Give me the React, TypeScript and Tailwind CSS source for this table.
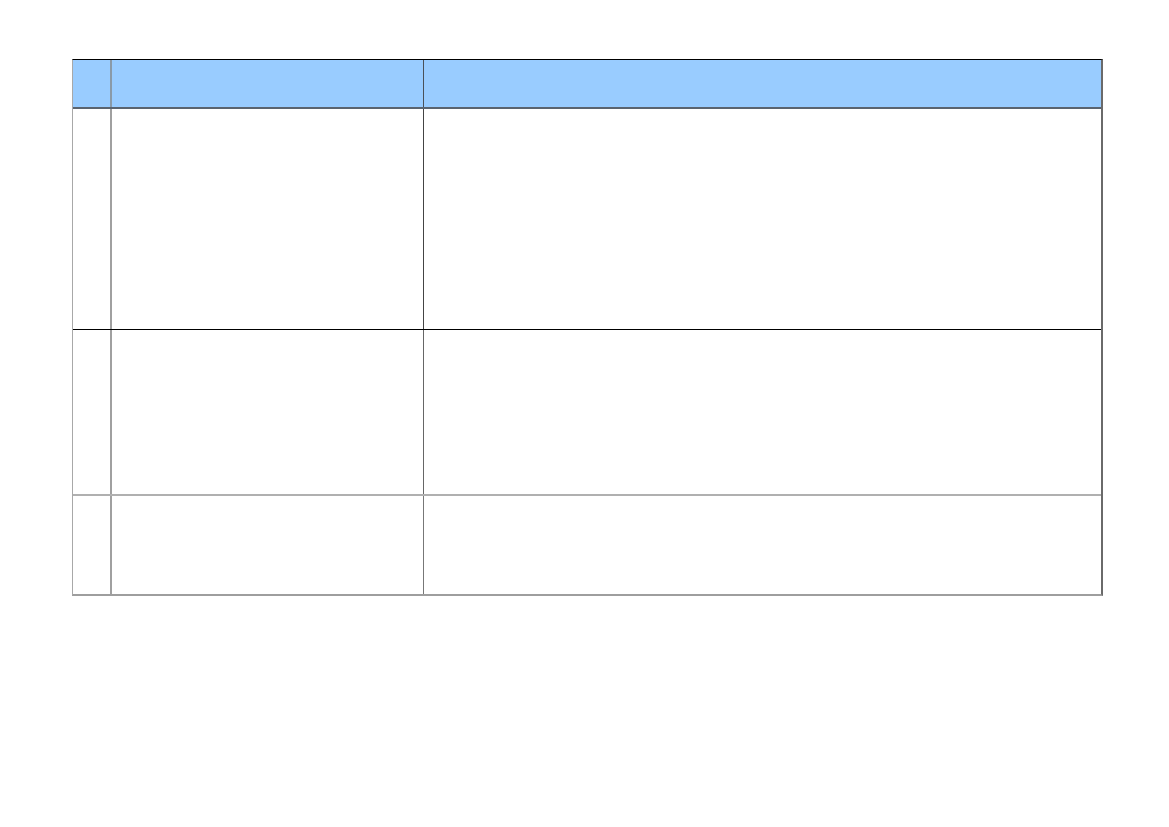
export default function App() {
  const rowCls = "grid grid-cols-[39px_312px_1fr]";
  return (
    <div className="w-[1169px] h-[827px] bg-white" style={{ fontFamily: "'Liberation Sans', sans-serif" }}>
      <div className="pl-[72px] pt-[59px]">
        <div className="w-[1031px] border-t border-t-black border-l border-l-[#a8a8a8] border-r-2 border-r-[#6a6a6a] border-b-2 border-b-[#9e9e9e]">
          <div className={`${rowCls} h-[49px] bg-[#99ccff] border-b-2 border-b-[#5a6470]`}>
            <div className="border-r-2 border-r-[#8a9aa8]" />
            <div className="border-r border-r-[#4a5058]" />
            <div />
          </div>
          <div className={`${rowCls} h-[221px] border-b border-b-black`}>
            <div className="border-r-2 border-r-[#a0a0a0]" />
            <div className="border-r border-r-[#444444]" />
            <div />
          </div>
          <div className={`${rowCls} h-[166px] border-b-2 border-b-[#b0b0b0]`}>
            <div className="border-r-2 border-r-[#a0a0a0]" />
            <div className="border-r border-r-[#666666]" />
            <div />
          </div>
          <div className={`${rowCls} h-[98px]`}>
            <div className="border-r-2 border-r-[#a0a0a0]" />
            <div className="border-r border-r-[#777777]" />
            <div />
          </div>
        </div>
      </div>
    </div>
  );
}
